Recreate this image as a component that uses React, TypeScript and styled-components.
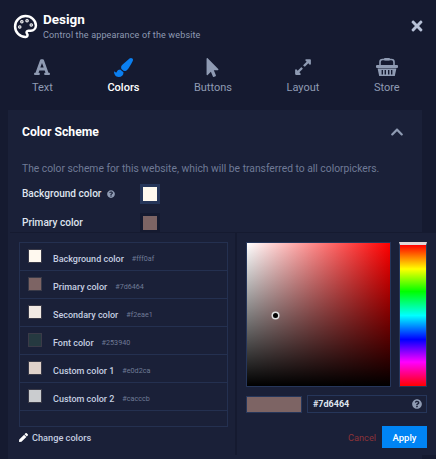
import styled, { createGlobalStyle } from 'styled-components'
import { Palette } from 'lucide-react'
import {
  FaFont,
  FaPaintBrush,
  FaMousePointer,
  FaExpandAlt,
  FaTimes,
  FaQuestionCircle,
  FaPen,
  FaChevronUp,
} from 'react-icons/fa'

const BasketIcon = () => (
  <svg width="22" height="18" viewBox="0 0 22 18" fill="currentColor">
    <path
      d="M4 8 V4 Q4 1.5 6.5 1.5 H15.5 Q18 1.5 18 4 V8"
      fill="none"
      stroke="currentColor"
      strokeWidth="1.6"
    />
    <rect x="8" y="0" width="6" height="2.6" rx="1" />
    <rect x="0" y="7" width="22" height="3" rx="1" />
    <path
      fillRule="evenodd"
      d="M1.6 10.5 H20.4 L18.8 18 H3.2 Z M5.6 12 V16.4 H7 V12 Z M8.6 12 V16.4 H10 V12 Z M12 12 V16.4 H13.4 V12 Z M15 12 V16.4 H16.4 V12 Z"
    />
  </svg>
)

const tabs = [
  { label: 'Text', icon: <FaFont size={18} /> },
  { label: 'Colors', icon: <FaPaintBrush size={19} />, active: true },
  { label: 'Buttons', icon: <FaMousePointer size={19} /> },
  { label: 'Layout', icon: <FaExpandAlt size={18} /> },
  { label: 'Store', icon: <BasketIcon /> },
]

const colors = [
  { name: 'Background color', hex: '#fff9ef', shown: '#fff0af' },
  { name: 'Primary color', hex: '#7d6464', shown: '#7d6464' },
  { name: 'Secondary color', hex: '#f2eae4', shown: '#f2eae1' },
  { name: 'Font color', hex: '#253940', shown: '#253940' },
  { name: 'Custom color 1', hex: '#e0d2ca', shown: '#e0d2ca' },
  { name: 'Custom color 2', hex: '#cacccf', shown: '#cacccb' },
]

export default function App() {
  return (
    <Page>
      <GlobalStyle />
      <Header>
        <Palette size={25} strokeWidth={2.4} color="#fff" />
        <HeaderText>
          <Title>Design</Title>
          <Subtitle>Control the appearance of the website</Subtitle>
        </HeaderText>
        <CloseButton>
          <FaTimes size={16} />
        </CloseButton>
      </Header>

      <Tabs>
        {tabs.map(({ label, icon, active }) => (
          <Tab key={label} $active={active}>
            <TabIcon $active={active}>{icon}</TabIcon>
            {label}
          </Tab>
        ))}
      </Tabs>

      <Card>
        <CardHead>
          <CardTitle>Color Scheme</CardTitle>
          <FaChevronUp size={14} color="#8f9bb3" />
        </CardHead>
        <Description>
          The color scheme for this website, which will be transferred to all colorpickers.
        </Description>
        <SchemeRow>
          <SchemeLabel>
            Background color
            <FaQuestionCircle size={8} color="#8f9bb3" />
          </SchemeLabel>
          <SwatchFrame $selected>
            <Swatch $color="#fff9ef" />
          </SwatchFrame>
        </SchemeRow>
        <SchemeRow>
          <SchemeLabel>Primary color</SchemeLabel>
          <SwatchFrame>
            <Swatch $color="#7d6464" />
          </SwatchFrame>
        </SchemeRow>

        <Popover>
          <ListPane>
            <ColorList>
              {colors.map((c) => (
                <ColorRow key={c.name}>
                  <RowSwatch $color={c.hex} />
                  <RowName>{c.name}</RowName>
                  <RowHex>{c.shown}</RowHex>
                </ColorRow>
              ))}
              <EmptyRow />
            </ColorList>
            <ChangeColors>
              <FaPen size={9} color="#fff" />
              Change colors
            </ChangeColors>
          </ListPane>

          <PickerPane>
            <PickerTop>
              <SatBox>
                <Marker />
              </SatBox>
              <HueBar />
            </PickerTop>
            <ValueRow>
              <ValuePreview />
              <HexField>
                #7d6464
                <FaQuestionCircle size={10} color="#8f9bb3" />
              </HexField>
            </ValueRow>
            <Actions>
              <CancelButton>Cancel</CancelButton>
              <ApplyButton>Apply</ApplyButton>
            </Actions>
          </PickerPane>
        </Popover>
      </Card>
    </Page>
  )
}

const GlobalStyle = createGlobalStyle`
  html, body {
    margin: 0;
    background: #151a30;
  }
  * {
    box-sizing: border-box;
  }
`

const Page = styled.div`
  width: 436px;
  height: 459px;
  overflow: hidden;
  background: #151a30;
  font-family: Roboto, "Liberation Sans", sans-serif;
  color: #fff;
`

const Header = styled.header`
  display: flex;
  align-items: center;
  height: 46px;
  padding: 6px 11px 0 13px;
`

const HeaderText = styled.div`
  display: flex;
  flex-direction: column;
  gap: 3px;
  margin-left: 5px;
  flex: 1;
`

const Title = styled.div`
  font-size: 13.5px;
  line-height: 16px;
  font-weight: 700;
`

const Subtitle = styled.div`
  font-size: 9px;
  line-height: 11px;
  color: #8f9bb3;
  letter-spacing: 0.15px;
`

const CloseButton = styled.div`
  display: flex;
  color: #b8c2d8;
`

const Tabs = styled.nav`
  display: flex;
  gap: 54.5px;
  height: 64px;
  padding: 12px 0 0 32px;
`

const Tab = styled.div<{ $active?: boolean }>`
  display: flex;
  flex-direction: column;
  align-items: center;
  font-size: 11px;
  line-height: 14px;
  font-weight: ${(p) => (p.$active ? 500 : 400)};
  color: ${(p) => (p.$active ? '#fff' : '#8f9bb3')};
`

const TabIcon = styled.div<{ $active?: boolean }>`
  display: flex;
  justify-content: center;
  height: 22px;
  margin-bottom: 1px;
  color: ${(p) => (p.$active ? '#0b7ff0' : '#8f9bb3')};
`

const Card = styled.section`
  position: relative;
  width: 414px;
  height: 349px;
  margin-left: 8px;
  padding: 0 14px;
  background: #1a2038;
`

const CardHead = styled.div`
  display: flex;
  align-items: center;
  justify-content: space-between;
  height: 44px;
  padding-right: 4px;
`

const CardTitle = styled.h2`
  margin: 0;
  font-size: 12.2px;
  font-weight: 700;
  color: #fff;
`

const Description = styled.p`
  margin: 8px 0 4px;
  font-size: 10.3px;
  line-height: 13px;
  color: #6f7a96;
  white-space: nowrap;
`

const SchemeRow = styled.div`
  display: flex;
  align-items: center;
  height: 29px;
`

const SchemeLabel = styled.div`
  display: flex;
  align-items: center;
  gap: 6px;
  width: 118px;
  font-size: 10.1px;
  font-weight: 500;
  color: #dfe4ee;
`

const SwatchFrame = styled.div<{ $selected?: boolean }>`
  display: flex;
  align-items: center;
  justify-content: center;
  width: 20px;
  height: 20px;
  background: ${(p) => (p.$selected ? '#26365a' : '#151a30')};
`

const Swatch = styled.div<{ $color: string }>`
  width: 14px;
  height: 14px;
  background: ${(p) => p.$color};
`

const Popover = styled.div`
  position: absolute;
  left: 2px;
  top: 122px;
  width: 426px;
  height: 223px;
  display: flex;
  background: #1a2038;
  border-top: 1px solid #151a30;
`

const ListPane = styled.div`
  width: 228px;
  padding: 9px 7px 0 9px;
  border-right: 2px solid #151a30;
`

const ColorList = styled.div`
  border: 1px solid #243050;
  height: 185px;
  display: flex;
  flex-direction: column;
`

const ColorRow = styled.div`
  display: flex;
  align-items: center;
  height: 28px;
  flex-shrink: 0;
  padding-left: 8px;
  border-bottom: 1px solid #243050;
`

const EmptyRow = styled.div`
  flex: 1;
`

const RowSwatch = styled.div<{ $color: string }>`
  width: 14px;
  height: 14px;
  margin: -1px 11px 0 0;
  background: ${(p) => p.$color};
  border: 1px solid #3a3a48;
`

const RowName = styled.span`
  font-size: 9px;
  font-weight: 500;
  color: #c5cee0;
  margin: 4px 8px 0 0;
`

const RowHex = styled.span`
  font-size: 7.2px;
  color: #6f7a96;
  margin-top: 4px;
`

const ChangeColors = styled.div`
  display: flex;
  align-items: center;
  gap: 4px;
  margin-top: 5px;
  font-size: 9.2px;
  font-weight: 500;
  color: #c5cee0;
`

const PickerPane = styled.div`
  flex: 1;
  padding: 9px 9px 0 9px;
`

const PickerTop = styled.div`
  display: flex;
  gap: 8px;
`

const SatBox = styled.div`
  position: relative;
  width: 145px;
  height: 145px;
  background: linear-gradient(to bottom, transparent, #000),
    linear-gradient(to right, #fff, #f00);
  border: 1px solid #26365a;
`

const Marker = styled.div`
  position: absolute;
  left: 26px;
  top: 70px;
  width: 5px;
  height: 5px;
  border-radius: 50%;
  background: #000;
  box-shadow: 0 0 0 1.5px #ddd;
`

const HueBar = styled.div`
  width: 28px;
  height: 145px;
  border: 1px solid #26365a;
  border-top: 3px solid #e0d8d8;
  background: linear-gradient(
    to bottom,
    #f00 0%,
    #ff0 17%,
    #0f0 33%,
    #0ff 50%,
    #00f 67%,
    #f0f 83%,
    #f00 100%
  );
`

const ValueRow = styled.div`
  display: flex;
  align-items: center;
  gap: 5px;
  margin-top: 8px;
`

const ValuePreview = styled.div`
  width: 56px;
  height: 17px;
  background: #7d6464;
  border: 1px solid #26365a;
`

const HexField = styled.div`
  display: flex;
  align-items: center;
  justify-content: space-between;
  width: 120px;
  height: 18px;
  padding: 0 4px 0 5px;
  font-size: 9px;
  font-weight: 700;
  color: #dfe4ee;
  border: 1px solid #26365a;
`

const Actions = styled.div`
  display: flex;
  align-items: center;
  justify-content: flex-end;
  gap: 6px;
  margin-top: 13px;
  width: 181px;
`

const CancelButton = styled.span`
  font-size: 9.2px;
  color: #8c3338;
`

const ApplyButton = styled.div`
  display: flex;
  align-items: center;
  justify-content: center;
  width: 45px;
  height: 22px;
  background: #0084f4;
  font-size: 9.5px;
  font-weight: 500;
  color: #fff;
`
